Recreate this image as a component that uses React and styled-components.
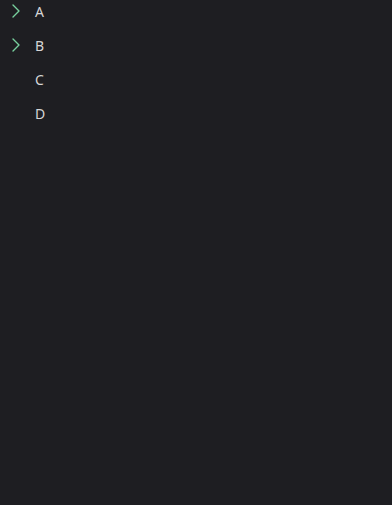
import React from "react";
import styled, { createGlobalStyle } from "styled-components";

const Global = createGlobalStyle`
  html, body { margin: 0; padding: 0; background: #1e1e22; }
  body { font-family: "Noto Sans", "Open Sans", sans-serif; }
  #root { min-height: 100vh; background: #1e1e22; }
`;

const Tree = styled.ul`
  list-style: none;
  margin: 0;
  padding: 0;
  display: flex;
  flex-direction: column;
  gap: 10px;
`;

const Row = styled.li`
  display: flex;
  align-items: center;
  height: 24px;
  padding-left: 4px;
  gap: 7px;
  color: #d6d6d6;
  font-size: 14px;
`;

const Toggle = styled.span`
  width: 24px;
  height: 24px;
  display: flex;
  align-items: center;
  justify-content: center;
  margin-top: -2px;
  color: #78d09e;
  visibility: ${(p) => (p.$hidden ? "hidden" : "visible")};
`;

const Label = styled.span`
  line-height: 24px;
`;

const Chevron = () => (
  <svg width="24" height="24" viewBox="0 0 24 24" fill="none" stroke="currentColor" strokeWidth="1.4" strokeLinecap="round" strokeLinejoin="round">
    <path d="m9 18 6-6-6-6" />
  </svg>
);

const items = [
  { label: "A", expandable: true },
  { label: "B", expandable: true },
  { label: "C", expandable: false },
  { label: "D", expandable: false },
];

export default function App() {
  return (
    <>
      <Global />
      <Tree>
        {items.map((it) => (
          <Row key={it.label}>
            <Toggle $hidden={!it.expandable}>
              <Chevron />
            </Toggle>
            <Label>{it.label}</Label>
          </Row>
        ))}
      </Tree>
    </>
  );
}
